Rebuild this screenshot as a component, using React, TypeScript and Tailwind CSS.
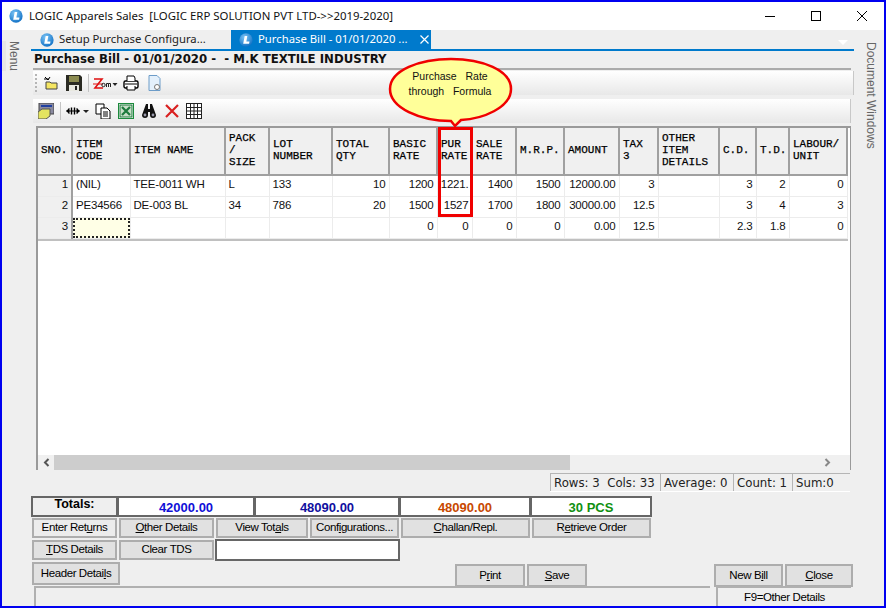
const COLS = [34, 58, 95, 44, 63, 57, 48, 35, 44, 48, 55, 39, 61, 37, 33, 58];

const HEADERS = [
  ['SNO.'],
  ['ITEM', 'CODE'],
  ['ITEM NAME'],
  ['PACK', '/', 'SIZE'],
  ['LOT', 'NUMBER'],
  ['TOTAL', 'QTY'],
  ['BASIC', 'RATE'],
  ['PUR', 'RATE'],
  ['SALE', 'RATE'],
  ['M.R.P.'],
  ['AMOUNT'],
  ['TAX', '3'],
  ['OTHER', 'ITEM', 'DETAILS'],
  ['C.D.'],
  ['T.D.'],
  ['LABOUR/', 'UNIT'],
];

const LEFT = [1, 2, 3, 4];

const ROWS = [
  ['1', '(NIL)', 'TEE-0011 WH', 'L', '133', '10', '1200', '1221.', '1400', '1500', '12000.00', '3', '', '3', '2', '0'],
  ['2', 'PE34566', 'DE-003 BL', '34', '786', '20', '1500', '1527', '1700', '1800', '30000.00', '12.5', '', '3', '4', '3'],
  ['3', '', '', '', '', '', '0', '0', '0', '0', '0.00', '12.5', '', '2.3', '1.8', '0'],
];

function Logo({ size = 14 }: { size?: number }) {
  return (
    <svg width={size} height={size} viewBox="0 0 16 16" className="shrink-0">
      <defs>
        <radialGradient id="lg" cx="40%" cy="30%" r="75%">
          <stop offset="0%" stopColor="#7cc4f5" />
          <stop offset="100%" stopColor="#0f6fc4" />
        </radialGradient>
      </defs>
      <circle cx="8" cy="8" r="7.6" fill="url(#lg)" />
      <path d="M6.5 3.5h3L8.4 9.6H12l-.5 2.6H4.8z" fill="#fff" />
    </svg>
  );
}

function Btn({ label, u, w, h = 'h-[20px]', flat }: { label: string; u?: number; w: string; h?: string; flat?: boolean }) {
  return (
    <button
      type="button"
      className={`${w} ${h} shrink-0 border-2 border-[#adadad] ${flat ? 'bg-[#ececec]' : 'bg-[#e1e1e1]'} text-center text-[11.5px] leading-none tracking-[-0.4px] text-black`}
    >
      {u === undefined ? (
        label
      ) : (
        <>
          {label.slice(0, u)}
          <span className="underline">{label[u]}</span>
          {label.slice(u + 1)}
        </>
      )}
    </button>
  );
}

function Tool({ children, w = 16, className = '' }: { children: React.ReactNode; w?: number; className?: string }) {
  return (
    <svg width={w} height="16" viewBox={`0 0 ${w} 16`} className={`shrink-0 ${className}`}>
      {children}
    </svg>
  );
}

export default function App() {
  return (
    <div className="relative flex h-[608px] w-[886px] flex-col overflow-hidden border-2 border-[#0000f0] bg-[#efefef] font-['Liberation_Sans',sans-serif] text-black">
      {/* title bar */}
      <div className="flex h-[28px] shrink-0 items-center bg-white pl-[7px]">
        <Logo />
        <span className="ml-[6px] whitespace-pre font-['Noto_Sans',sans-serif] text-[11.4px] text-[#111]">
          LOGIC Apparels Sales  [LOGIC ERP SOLUTION PVT LTD-&gt;&gt;2019-2020]
        </span>
        <div className="ml-auto flex items-center">
          <svg width="12" height="12" viewBox="0 0 12 12" className="mr-[34px]">
            <path d="M1 6.5h10" stroke="#000" />
          </svg>
          <svg width="12" height="12" viewBox="0 0 12 12" className="mr-[34px]">
            <rect x="1.5" y="1.5" width="9" height="9" fill="none" stroke="#000" />
          </svg>
          <svg width="12" height="12" viewBox="0 0 12 12" className="mr-[16px]">
            <path d="M1 1l10 10M11 1L1 11" stroke="#000" />
          </svg>
        </div>
      </div>

      <div className="flex min-h-0 flex-1">
        {/* left rail */}
        <div className="w-[29px] shrink-0 pt-[11px]">
          <div className="flex h-[30px] w-[4px] bg-[#e6e6e6]">
            <span className="ml-[6px] text-[12px] leading-[12px] text-[#666] [writing-mode:vertical-rl]">Menu</span>
          </div>
        </div>

        {/* centre */}
        <div className="flex w-[823px] shrink-0 flex-col">
          {/* tabs */}
          <div className="flex h-[19px] shrink-0 items-stretch">
            <div className="flex w-[200px] items-center gap-[5px] whitespace-nowrap pl-[9px] font-['Noto_Sans',sans-serif] text-[11.3px] text-[#222]">
              <Logo />
              <span>Setup Purchase Configura...</span>
            </div>
            <div className="flex w-[200px] items-center gap-[5px] whitespace-nowrap bg-[#007acc] pl-[8px] font-['Noto_Sans',sans-serif] text-[11.3px] text-white">
              <Logo />
              <span>Purchase Bill - 01/01/2020 ...</span>
              <svg width="9" height="9" viewBox="0 0 9 9" className="ml-[8px]">
                <path d="M.5.5l8 8M8.5.5l-8 8" stroke="#fff" strokeWidth="1.2" />
              </svg>
            </div>
            <div className="ml-auto mr-[6px] mt-[10px] h-0 w-0 border-x-[5px] border-t-[5px] border-x-transparent border-t-white" />
          </div>
          <div className="h-[2px] shrink-0 bg-[#007acc]" />

          {/* heading */}
          <div className="flex h-[17px] shrink-0 items-center whitespace-pre pl-[3px] font-['DejaVu_Sans',sans-serif] text-[11.75px] font-bold text-[#111]">
            Purchase Bill - 01/01/2020 -  - M.K TEXTILE INDUSTRY
          </div>
          <div className="ml-[2px] mr-[3px] h-[2px] shrink-0 bg-[#ababab]" />

          {/* toolbars */}
          <div className="ml-[2px] mt-[1px] flex h-[24px] shrink-0 items-center border-r border-[#c8c8c8] bg-gradient-to-b from-white to-[#e8e8e8]">
            <div className="ml-[2px] h-[18px] w-[2px] border-l-2 border-dotted border-[#b5b5b5]" />
            <Tool className="ml-[6px]">
              <path d="M3 7h4l1 1h6v6H3z" fill="#f5e663" stroke="#444" />
              <path d="M2 2l3 3M7 2L5 5M1 4h5" stroke="#000" />
            </Tool>
            <Tool className="ml-[7px]">
              <path d="M0 0h14l2 2v14H0z" fill="#2a2a22" />
              <rect x="3" y="1" width="10" height="6" fill="#8a8a50" />
              <rect x="3" y="10" width="10" height="6" fill="#e8e8e0" />
              <rect x="9" y="11" width="2" height="4" fill="#222" />
            </Tool>
            <div className="ml-[6px] h-[18px] w-px shrink-0 bg-[#c4c4c4]" />
            <Tool w={25} className="ml-[4px]">
              <path d="M1 4h8L2 13h8" fill="none" stroke="#e01010" strokeWidth="1.6" />
              <path d="M0 9h10" stroke="#e01010" />
              <circle cx="10.500" cy="10" r="1.700" fill="none" stroke="#222" />
              <path d="M13.500 12V8.500h2V12M15.500 8.500h2V12" fill="none" stroke="#222" />
              <path d="M19.500 8h5L22 11z" fill="#222" />
            </Tool>
            <Tool className="ml-[5px]">
              <rect x="1" y="6" width="14" height="7" rx="1.5" fill="#fff" stroke="#000" strokeWidth="1.4" />
              <path d="M4 6V1h7l1 2v3M4 11v4h8v-4" fill="#fff" stroke="#000" />
              <path d="M2 9h12" stroke="#000" />
            </Tool>
            <Tool className="ml-[8px]">
              <path d="M2 .5h8l3 3v12H2z" fill="#e4f0fb" stroke="#6d9cc8" />
              <circle cx="10" cy="12" r="2.500" fill="#fff" stroke="#777" />
            </Tool>
          </div>
          <div className="ml-[2px] mr-[3px] mt-[4px] flex h-[24px] shrink-0 items-center border-r border-[#c8c8c8] bg-gradient-to-b from-white to-[#e8e8e8]">
            <Tool className="ml-[5px]">
              <rect x="1" y="0" width="15" height="11" fill="#8a8aa0" stroke="#444" />
              <rect x="3" y="2" width="11" height="2" fill="#2040a0" />
              <path d="M0 9l4-3h8v7l-4 3H0z" fill="#e4e460" stroke="#555" />
            </Tool>
            <div className="ml-[6px] h-[18px] w-px shrink-0 bg-[#c4c4c4]" />
            <Tool w={23} className="ml-[5px]">
              <path d="M0 8h14M1 8l2-2.500v5zM13 8l-2-2.500v5z" fill="#000" stroke="#000" />
              <path d="M5.500 4.500v7M8.500 4.500v7" stroke="#000" strokeWidth="1.400" />
              <path d="M17 7h6l-3 3z" fill="#222" />
            </Tool>
            <Tool className="ml-[6px]">
              <path d="M1 1h8v10H1z" fill="#fff" stroke="#000" />
              <path d="M6 5h6l3 3v8H6z" fill="#fff" stroke="#000" />
              <path d="M8 9h5M8 11h5M8 13h5" stroke="#000" />
            </Tool>
            <Tool className="ml-[7px]">
              <rect x=".5" y=".5" width="15" height="15" fill="#fff" stroke="#1c8a3c" />
              <rect x="2" y="2" width="12" height="12" fill="#c9dfc9" stroke="#1c7a3c" />
              <path d="M4 4l8 8M12 4l-8 8" stroke="#1c7a3c" strokeWidth="2.200" />
            </Tool>
            <Tool className="ml-[7px]">
              <path d="M5 1h2v5h2V1h2l4 11a3 3 0 1 1-6 0V9H7v3a3 3 0 1 1-6 0z" fill="#111" />
              <circle cx="4" cy="12" r="1.400" fill="#99a" />
              <circle cx="12" cy="12" r="1.400" fill="#99a" />
            </Tool>
            <Tool className="ml-[7px]">
              <path d="M2 2l12 12M14 2L2 14" stroke="#d92020" strokeWidth="2.200" />
            </Tool>
            <Tool className="ml-[6px]">
              <rect x=".5" y=".5" width="15" height="15" fill="#fff" stroke="#222" />
              <path d="M4.500 0v16M8 0v16M11.500 0v16M0 4.500h16M0 8h16M0 11.500h16" stroke="#222" />
            </Tool>
          </div>

          {/* grid */}
          <div className="ml-[5px] mt-[3px] flex h-[344px] w-[815px] shrink-0 flex-col border-2 border-b-0 border-r border-[#9a9a9a] bg-white">
            <table className="w-[809px] table-fixed border-collapse">
              <colgroup>
                {COLS.map((w, i) => (
                  <col key={i} style={{ width: w }} />
                ))}
              </colgroup>
              <thead>
                <tr className="h-[47px]">
                  {HEADERS.map((lines, i) => (
                    <th
                      key={i}
                      className="border-b-2 border-r-2 border-[#a0a0a0] bg-[#f0f0f0] pb-[2px] pl-[3px] text-left align-middle font-['Liberation_Mono',monospace] text-[11px] font-normal leading-[12px] text-black [-webkit-text-stroke:0.25px_#000]"
                    >
                      {lines.map((l) => (
                        <div key={l}>{l}</div>
                      ))}
                    </th>
                  ))}
                </tr>
              </thead>
              <tbody>
                {ROWS.map((row, r) => (
                  <tr key={r} className="h-[21px]">
                    {row.map((cell, c) => (
                      <td
                        key={c}
                        className={`overflow-hidden whitespace-nowrap border-b border-r border-[#ececec] pb-[2px] text-[11.5px] leading-none tracking-[-0.2px] text-[#111] ${
                          LEFT.includes(c) ? 'px-[3px] text-left' : 'px-[3px] text-right'
                        } ${c === 0 ? 'border-r-2 border-r-[#a0a0a0] bg-[#f0f0f0]' : ''} ${
                          r === 2 && c === 1 ? '!p-0' : ''
                        }`}
                      >
                        {r === 2 && c === 1 ? (
                          <div className="h-[20px] border-2 border-dotted border-[#222] bg-[#ffffe6]" />
                        ) : (
                          cell
                        )}
                      </td>
                    ))}
                  </tr>
                ))}
              </tbody>
            </table>
            <div className="w-[810px] border-t-2 border-[#c0c0c0]" />
            <div className="flex-1" />
            {/* horizontal scrollbar */}
            <div className="flex h-[15px] shrink-0 items-center bg-[#f0f0f0]">
              <div className="flex w-[16px] shrink-0 justify-center">
                <svg width="7" height="9" viewBox="0 0 7 9">
                  <path d="M5.500 1L2 4.500 5.500 8" fill="none" stroke="#555" strokeWidth="2" />
                </svg>
              </div>
              <div className="h-full w-[516px] shrink-0 bg-[#cdcdcd]" />
              <div className="ml-auto flex w-[26px] shrink-0 justify-start">
                <svg width="7" height="9" viewBox="0 0 7 9">
                  <path d="M1.500 1L5 4.500 1.500 8" fill="none" stroke="#888" strokeWidth="2" />
                </svg>
              </div>
            </div>
          </div>

          {/* status cells */}
          <div className="ml-[519px] mt-[3px] flex h-[19px] w-[300px] shrink-0 whitespace-pre border-b border-white font-['DejaVu_Sans',sans-serif] text-[11.75px] leading-[18px] text-[#222]">
            <div className="w-[110px] border-l border-t border-[#b5b5b5] pl-[3px]">Rows: 3  Cols: 33</div>
            <div className="w-[73px] border-l border-t border-[#b5b5b5] pl-[3px]">Average: 0</div>
            <div className="w-[59px] border-l border-t border-[#b5b5b5] pl-[3px]">Count: 1</div>
            <div className="w-[58px] border-l border-t border-[#b5b5b5] pl-[3px]">Sum:0</div>
          </div>

          {/* totals */}
          <div className="mt-[4px] flex h-[21px] shrink-0 text-center text-[13px] font-bold leading-[20px]">
            <div className="w-[87px] border-2 border-[#666] text-[12.5px] leading-[13px]">Totals:</div>
            <div className="-ml-[1px] w-[138px] border-2 border-[#666] bg-white text-[#1010d8]">42000.00</div>
            <div className="-ml-[1px] w-[146px] border-2 border-[#666] bg-white text-[#1010a0]">48090.00</div>
            <div className="-ml-[1px] w-[132px] border-2 border-[#666] bg-white text-[#c84800]">48090.00</div>
            <div className="-ml-[1px] w-[122px] border-2 border-[#666] bg-white text-[#109010]">30 PCS</div>
          </div>

          {/* button rows */}
          <div className="mt-[1px] flex h-[20px] shrink-0 gap-[2px] pl-[1px]">
            <Btn label="Enter Returns" u={9} w="w-[85px]" flat />
            <Btn label="Other Details" u={0} w="w-[95px]" />
            <Btn label="View Totals" u={8} w="w-[92px]" />
            <Btn label="Configurations..." u={4} w="w-[89px]" />
            <Btn label="Challan/Repl." u={0} w="w-[129px]" />
            <Btn label="Retrieve Order" u={1} w="w-[119px]" />
          </div>
          <div className="mt-[2px] flex h-[20px] shrink-0 gap-[2px] pl-[1px]">
            <Btn label="TDS Details" u={0} w="w-[85px]" />
            <Btn label="Clear TDS" w="w-[95px]" />
            <div className="-ml-[1px] -mt-[1px] h-[22px] w-[185px] border-2 border-[#666] bg-white" />
          </div>
          <div className="mt-[2px] flex h-[23px] shrink-0 pl-[1px]">
            <Btn label="Header Details" u={12} w="w-[88px]" h="h-[23px]" />
            <div className="ml-[335px]">
              <Btn label="Print" u={1} w="w-[70px]" h="h-[23px]" />
            </div>
            <div className="ml-[2px]">
              <Btn label="Save" u={0} w="w-[60px]" h="h-[23px]" />
            </div>
            <div className="ml-[127px]">
              <Btn label="New Bill" u={5} w="w-[69px]" h="h-[23px]" />
            </div>
            <div className="ml-[2px]">
              <Btn label="Close" u={0} w="w-[68px]" h="h-[23px]" />
            </div>
          </div>
          <div className="mt-[1px] flex min-h-0 flex-1">
            <div className="ml-[3px] w-[676px] border-l-2 border-t-2 border-[#b0b0b0]" />
            <div className="ml-[6px] w-[135px] border-l-2 border-t-2 border-[#b0b0b0] text-center text-[11.5px] leading-[18px] tracking-[-0.4px]">
              F9=Other Details
            </div>
          </div>
        </div>

        {/* right rail */}
        <div className="w-[30px] shrink-0 pl-[10px] pt-[12px]">
          <span className="text-[12px] leading-[14px] text-[#666] [writing-mode:vertical-rl]">Document Windows</span>
        </div>
      </div>

      {/* balloon + highlight over the PUR RATE column */}
      <div className="absolute left-[435.500px] top-[125px] h-[90px] w-[35px] border-[3px] border-[#f00000]" />
      <svg width="130" height="75" viewBox="0 0 130 75" className="absolute left-[383px] top-[54px]">
        <path
          d="M66 65 C35 65 5 52 5 33 C5 14 35 3 66 3 C97 3 126 14 126 33 C126 52 97 63 76 64 L70 70 L66 65Z"
          fill="#ffff99"
          stroke="#f00000"
          strokeWidth="2.500"
        />
      </svg>
      <div className="absolute left-[383px] top-[67px] w-[130px] whitespace-pre text-center text-[10.500px] leading-[15px] text-[#111]">
        {'Purchase   Rate\nthrough   Formula'}
      </div>
    </div>
  );
}
